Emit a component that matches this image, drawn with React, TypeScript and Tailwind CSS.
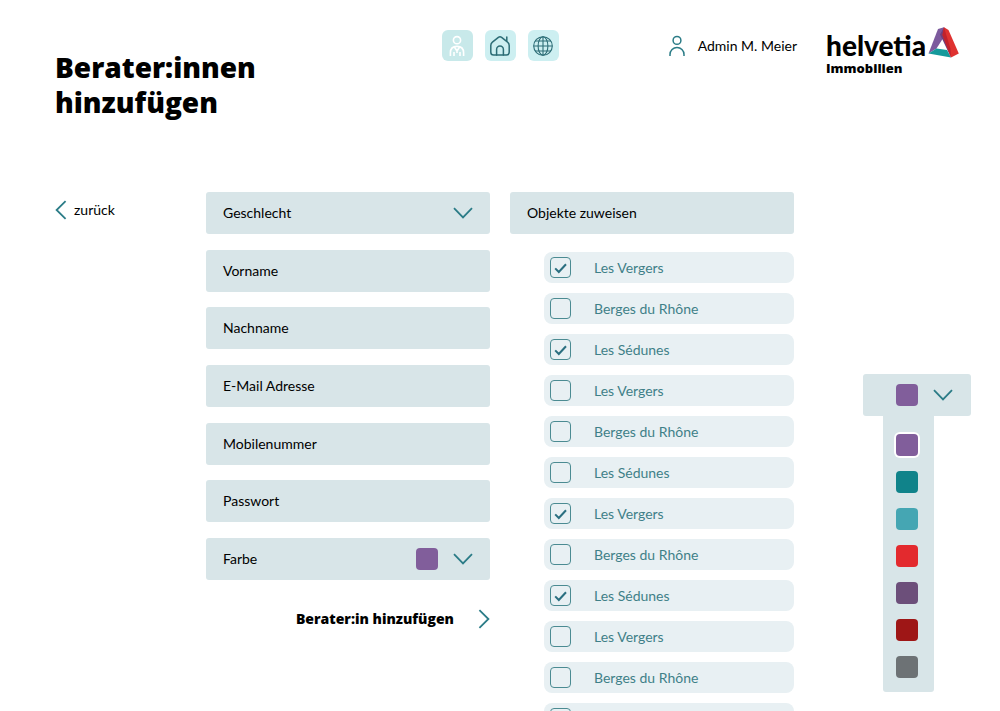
import { useState } from 'react';
import clsx from 'clsx';

type Estate = { id: number; name: string; assigned: boolean };

const TEXT_FIELDS = [
  { id: 'firstname', label: 'Vorname', type: 'text' },
  { id: 'lastname', label: 'Nachname', type: 'text' },
  { id: 'email', label: 'E-Mail Adresse', type: 'email' },
  { id: 'mobile', label: 'Mobilenummer', type: 'tel' },
  { id: 'password', label: 'Passwort', type: 'password' },
];

const COLORS = [
  { name: 'Violett', className: 'bg-[#815e9b]' },
  { name: 'Petrol', className: 'bg-[#10838a]' },
  { name: 'Türkis', className: 'bg-[#45a6b3]' },
  { name: 'Rot', className: 'bg-[#e32a2e]' },
  { name: 'Pflaume', className: 'bg-[#6c4f7a]' },
  { name: 'Dunkelrot', className: 'bg-[#9e1616]' },
  { name: 'Grau', className: 'bg-[#6d7275]' },
];

const NAMES = ['Les Vergers', 'Berges du Rhône', 'Les Sédunes'];
const ASSIGNED = [0, 2, 6, 8];

const INITIAL_ESTATES: Estate[] = Array.from({ length: 12 }, (_, i) => ({
  id: i,
  name: NAMES[i % 3],
  assigned: ASSIGNED.includes(i),
}));

const fieldClass = 'flex h-[42px] w-full items-center rounded-[3px] bg-[#d8e5e8] px-[17px] text-sm text-black';
const heavyClass = "font-['Open_Sans','Lato',sans-serif] font-extrabold";

function Chevron({ className }: { className?: string }) {
  return (
    <svg viewBox="0 0 20 12" className={clsx('h-3 w-5 shrink-0', className)} fill="none" stroke="#2b7c87" strokeWidth="1.8">
      <path d="M1 1.2 10 10.4 19 1.2" />
    </svg>
  );
}

function SideChevron({ direction }: { direction: 'left' | 'right' }) {
  return (
    <svg viewBox="0 0 12 20" className="h-5 w-3 shrink-0" fill="none" stroke="#2b7c87" strokeWidth="1.8">
      <path d={direction === 'left' ? 'M10.6 1.2 1.6 10l9 8.8' : 'M1.4 1.2l9 8.8-9 8.8'} />
    </svg>
  );
}

function Logo() {
  return (
    <a href="#" className="block text-black">
      <span className="flex items-start">
        <span className="pt-1 text-[28px] leading-[30px] font-black">helvetia</span>
        <svg viewBox="0 0 32 34" className="ml-px h-[34px] w-8 shrink-0">
          <path d="M17 1.2 11 3 1.5 27.5 9.5 22.6l6.4-10.2z" fill="#7c5a9d" />
          <path d="M1.5 27.5 9.5 22.4l10.5 1.6 4 7.4z" fill="#15999b" />
          <path d="M17 1.2 13 8.4 24 31.6 21 21z" fill="#6f3f7c" />
          <path d="M17 1.2 21.5 4 31.8 27.5 24 31.6 15.6 9z" fill="#df3230" />
          <path d="M17 1.2 15.4 9l8.6 22.6-.6-9z" fill="#c0222d" />
        </svg>
      </span>
      <span className={clsx(heavyClass, 'block text-[13px] leading-4')}>Immobilien</span>
    </a>
  );
}

function MainNav() {
  const itemClass = 'flex size-[31px] items-center justify-center rounded-md';
  return (
    <nav className="mt-1 flex gap-3">
      <a href="#" aria-label="Berater:innen" className={clsx(itemClass, 'bg-[#c8e9ea]')}>
        <svg viewBox="0 0 20 24" className="h-6 w-5" fill="none" stroke="#fff" strokeWidth="1.6">
          <circle cx="10" cy="6.2" r="3.6" />
          <path d="M3.4 22v-3.2c0-4 2.6-6.4 6.6-6.4s6.6 2.4 6.6 6.4V22M7.4 13l2.6 4 2.6-4M7 22v-4M10 17v2M13 22v-4" />
        </svg>
      </a>
      <a href="#" aria-label="Objekte" className={clsx(itemClass, 'bg-[#cdeff1]')}>
        <svg viewBox="0 0 22 22" className="size-[22px]" fill="none" stroke="#2c6d76" strokeWidth="1.5" strokeLinejoin="round" strokeLinecap="round">
          <path d="M3.4 7.2 9.4 2.4q1.6-1.2 3.2 0l6 4.8q1.6 1.2 1.6 3.2v6.8q0 2.8-2.8 2.8H4.6q-2.8 0-2.8-2.8v-6.8q0-2 1.6-3.2M17.8 6V2" />
          <path d="M7.6 20v-5.6a3.4 3.4 0 0 1 6.8 0V20" />
        </svg>
      </a>
      <a href="#" aria-label="Sprache" className={clsx(itemClass, 'bg-[#cdeff1]')}>
        <svg viewBox="0 0 22 22" className="size-[22px]" fill="none" stroke="#2c6d76" strokeWidth="1.1">
          <circle cx="11" cy="11" r="9.3" />
          <ellipse cx="11" cy="11" rx="4.9" ry="9.3" />
          <path d="M11 1.7v18.6M1.7 11h18.6M3.2 6h15.6M3.2 16h15.6" />
        </svg>
      </a>
    </nav>
  );
}

function Header() {
  return (
    <header className="grid grid-cols-[1fr_auto_1fr] items-start px-[41px] pt-[26px]">
      <h1 className={clsx(heavyClass, 'mt-6 ml-[14px] text-[28px] leading-[35px]')}>
        Berater:innen
        <br />
        hinzufügen
      </h1>
      <MainNav />
      <div className="flex items-start justify-end gap-[29px]">
        <a href="#" className="mt-[9px] flex items-center gap-3 text-sm">
          <svg viewBox="0 0 18 22" className="h-[22px] w-[18px]" fill="none" stroke="#2b7c87" strokeWidth="1.5">
            <circle cx="9" cy="5.4" r="3.9" />
            <path d="M2 21v-1.6a7 7 0 0 1 14 0V21" />
          </svg>
          Admin M. Meier
        </a>
        <Logo />
      </div>
    </header>
  );
}

function Swatch({ className }: { className: string }) {
  return <span className={clsx('block size-[22px] shrink-0 rounded', className)} />;
}

function AdvisorForm({ color }: { color: string }) {
  return (
    <form className="min-w-0 flex-1" onSubmit={(e) => e.preventDefault()}>
      <div className="flex h-[388px] flex-col justify-between">
        <div className={fieldClass}>
          <label htmlFor="gender">Geschlecht</label>
          <select id="gender" className="h-full min-w-0 flex-1 appearance-none pl-3 outline-none">
            <option value=""></option>
            <option value="f">Frau</option>
            <option value="m">Herr</option>
          </select>
          <Chevron className="pointer-events-none" />
        </div>
        {TEXT_FIELDS.map((field) => (
          <div key={field.id} className={fieldClass}>
            <label htmlFor={field.id}>{field.label}</label>
            <input id={field.id} type={field.type} className="h-full min-w-0 flex-1 pl-3 outline-none" />
          </div>
        ))}
        <button type="button" className={clsx(fieldClass, 'justify-between')}>
          Farbe
          <span className="flex items-center gap-[15px]">
            <Swatch className={color} />
            <Chevron />
          </span>
        </button>
      </div>
      <button
        type="submit"
        className={clsx(heavyClass, 'mt-7 ml-auto flex items-center gap-6 text-sm leading-[22px]')}
      >
        Berater:in hinzufügen
        <SideChevron direction="right" />
      </button>
    </form>
  );
}

function EstateList() {
  const [estates, setEstates] = useState(INITIAL_ESTATES);

  const toggle = (id: number) =>
    setEstates((prev) => prev.map((e) => (e.id === id ? { ...e, assigned: !e.assigned } : e)));

  return (
    <section className="min-w-0 flex-1">
      <h2 className={fieldClass}>Objekte zuweisen</h2>
      <ul className="mt-[18px] ml-[34px] space-y-[10px]">
        {estates.map((estate) => (
          <li key={estate.id}>
            <label className="flex h-[31px] items-center gap-[23px] rounded-lg bg-[#e8f0f3] px-1.5 text-sm text-[#3f8088]">
              <span className="grid size-[21px] shrink-0">
                <input
                  type="checkbox"
                  checked={estate.assigned}
                  onChange={() => toggle(estate.id)}
                  className="peer col-start-1 row-start-1 size-[21px] appearance-none rounded border border-[#4b8b92]"
                />
                <svg
                  viewBox="0 0 21 21"
                  className="pointer-events-none invisible col-start-1 row-start-1 peer-checked:visible"
                  fill="none"
                  stroke="#2b6f80"
                  strokeWidth="2"
                >
                  <path d="m5.2 11.4 3.6 3.6 7.2-7.8" />
                </svg>
              </span>
              {estate.name}
            </label>
          </li>
        ))}
      </ul>
    </section>
  );
}

function ColorPicker({ value, onChange }: { value: string; onChange: (color: string) => void }) {
  return (
    <div className="mt-[182px] ml-[49px] w-[108px] shrink-0">
      <button
        type="button"
        aria-label="Farbe wählen"
        className="flex h-[42px] w-full items-center gap-[15px] rounded-[3px] bg-[#d8e5e8] pl-[33px]"
      >
        <Swatch className={value} />
        <Chevron />
      </button>
      <div className="ml-5 flex w-[51px] flex-col gap-[15px] rounded-b-[3px] bg-[#d8e5e8] pt-[18px] pb-[14px] pl-[13px]">
        {COLORS.map((color) => (
          <input
            key={color.name}
            type="radio"
            name="color"
            aria-label={color.name}
            checked={value === color.className}
            onChange={() => onChange(color.className)}
            className={clsx('size-[22px] appearance-none rounded checked:ring-2 checked:ring-white', color.className)}
          />
        ))}
      </div>
    </div>
  );
}

export default function App() {
  const [color, setColor] = useState(COLORS[0].className);

  return (
    <div className="h-screen overflow-hidden bg-white font-['Lato',sans-serif] text-black">
      <Header />
      <main className="mt-[72px] flex items-start gap-5 pr-[29px] pl-[55px]">
        <div className="w-[131px] shrink-0 pt-2">
          <a href="#" className="inline-flex items-center gap-[7px] text-sm">
            <SideChevron direction="left" />
            zurück
          </a>
        </div>
        <AdvisorForm color={color} />
        <EstateList />
        <ColorPicker value={color} onChange={setColor} />
      </main>
    </div>
  );
}
